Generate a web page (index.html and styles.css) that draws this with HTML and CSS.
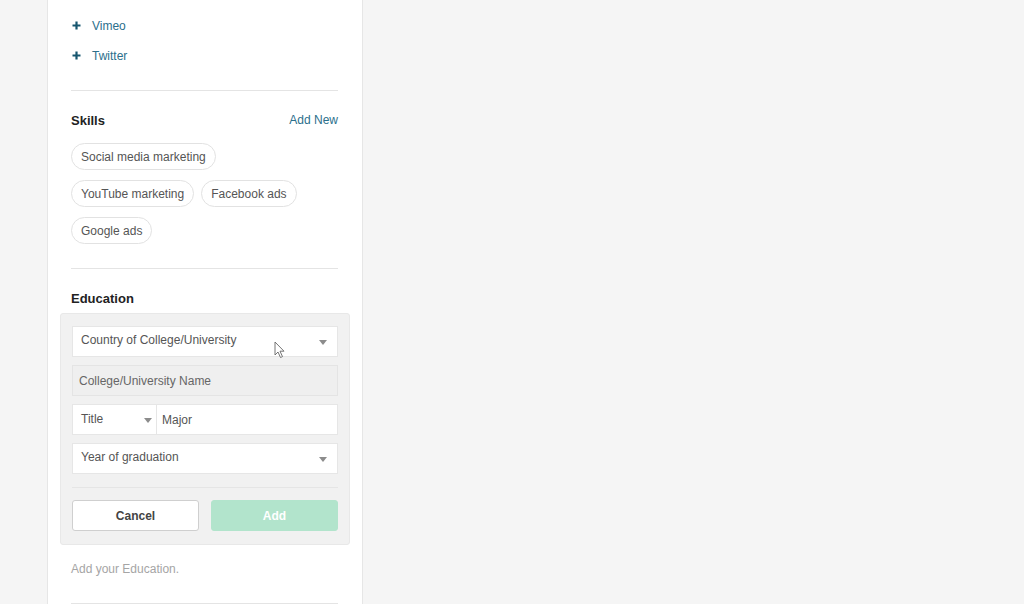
FILE: index.html
```html
<!DOCTYPE html>
<html>
<head>
<meta charset="utf-8">
<link rel="stylesheet" href="styles.css">
</head>
<body>
<div class="panel">
  <ul class="links">
    <li><svg class="plus" width="9" height="9" viewBox="0 0 9 9"><path d="M4.5 0.5V8.5M0.5 4.5H8.5" stroke="#17566f" stroke-width="2.2"/></svg><span class="link">Vimeo</span></li>
    <li><svg class="plus" width="9" height="9" viewBox="0 0 9 9"><path d="M4.5 0.5V8.5M0.5 4.5H8.5" stroke="#17566f" stroke-width="2.2"/></svg><span class="link">Twitter</span></li>
  </ul>

  <section class="section skills">
    <div class="sec-head">
      <h3>Skills</h3>
      <a class="add-new">Add New</a>
    </div>
    <div class="chips">
      <div class="chip-row"><span class="chip">Social media marketing</span></div>
      <div class="chip-row"><span class="chip">YouTube marketing</span><span class="chip">Facebook ads</span></div>
      <div class="chip-row"><span class="chip">Google ads</span></div>
    </div>
  </section>

  <section class="section education">
    <div class="sec-head"><h3>Education</h3></div>
    <div class="edu-form">
      <div class="field select"><span>Country of College/University</span><i class="caret"></i></div>
      <div class="field disabled"><span>College/University Name</span></div>
      <div class="field split">
        <div class="part title"><span>Title</span><i class="caret"></i></div>
        <div class="part major"><span>Major</span></div>
      </div>
      <div class="field select"><span>Year of graduation</span><i class="caret"></i></div>
      <div class="actions">
        <button class="btn cancel">Cancel</button>
        <button class="btn add">Add</button>
      </div>
      <svg class="cursor" width="12" height="18" viewBox="0 0 12 18"><path d="M1 1 L1 14 L4 11 L6.5 16.5 L8.5 15.6 L6 10.2 L10 10.2 Z" fill="#fff" stroke="#666" stroke-width="0.9" stroke-linejoin="round"/></svg>
    </div>
    <p class="hint">Add your Education.</p>
  </section>
  <div class="section end"></div>
</div>
</body>
</html>
```

FILE: styles.css
```css
html, body {
  margin: 0;
  padding: 0;
  background: #f5f5f5;
  font-family: "Liberation Sans", Arial, sans-serif;
  overflow: hidden;
}

.panel {
  margin: 0 0 0 47px;
  width: 268px;
  padding: 10px 23px 0;
  background: #fff;
  border-left: 1px solid #e6e6e6;
  border-right: 1px solid #e6e6e6;
  min-height: 700px;
}

.links {
  list-style: none;
  margin: 0;
  padding: 0 0 20px 0;
}
.links li {
  display: flex;
  align-items: center;
  height: 30px;
  font-size: 12px;
}
.links li span {
  margin-top: 2px;
}
.plus {
  margin: 1px 11px 0 1px;
}
.link {
  color: #2b6f8c;
}

.section {
  border-top: 1px solid #e4e4e4;
  margin-right: 1px;
}

.sec-head {
  display: flex;
  justify-content: space-between;
  align-items: center;
  height: 20px;
}
.sec-head h3 {
  margin: 0;
  font-size: 13px;
  font-weight: bold;
  color: #222;
}
.add-new {
  font-size: 12px;
  color: #2b6f8c;
}

.skills {
  padding: 19px 0 24px;
}
.chips {
  display: flex;
  flex-direction: column;
  gap: 10px;
  margin-top: 13px;
}
.chip-row {
  display: flex;
  gap: 7px;
}
.chip {
  display: inline-flex;
  align-items: center;
  height: 25px;
  padding: 0 9px;
  border: 1px solid #e2e2e2;
  border-radius: 14px;
  font-size: 12px;
  color: #555;
}

.education {
  padding: 19px 0 0;
}
.edu-form {
  position: relative;
  margin: 5px -12px 0 -11px;
  padding: 12px 11px 13px 11px;
  background: #f1f1f1;
  border: 1px solid #e8e8e8;
  border-radius: 3px;
  display: flex;
  flex-direction: column;
  gap: 8px;
}
.field {
  height: 31px;
  box-sizing: border-box;
  background: #fff;
  border: 1px solid #e6e6e6;
  display: flex;
  align-items: center;
  justify-content: space-between;
  padding: 0 10px 0 8px;
  font-size: 12px;
  color: #555;
}
.field.disabled {
  background: #efefef;
  border-color: #e4e4e4;
  padding-left: 6px;
  color: #666;
}
.field.split {
  padding: 0;
}
.part {
  height: 100%;
  display: flex;
  align-items: center;
}
.part.title {
  width: 84px;
  box-sizing: border-box;
  padding: 0 4px 0 8px;
  justify-content: space-between;
  border-right: 1px solid #e6e6e6;
}
.part.title span {
  margin-top: -2px;
}
.part.title .caret {
  margin-top: 2px;
}
.part.major {
  flex: 1;
  padding-left: 5px;
}
.caret {
  width: 0;
  height: 0;
  border-left: 4.5px solid transparent;
  border-right: 4.5px solid transparent;
  border-top: 5px solid #8c8c8c;
  margin-top: 2px;
}
.select span {
  margin-top: -3px;
}

.actions {
  margin-top: 5px;
  padding-top: 12px;
  border-top: 1px solid #e5e5e5;
  display: flex;
  gap: 12px;
}
.btn {
  flex: 1;
  height: 31px;
  border-radius: 3px;
  font-family: "Liberation Sans", Arial, sans-serif;
  font-size: 12px;
  font-weight: bold;
}
.cancel {
  background: #fff;
  border: 1px solid #cfcfcf;
  color: #444;
}
.add {
  background: #b2e4cc;
  border: 1px solid #b2e4cc;
  color: #fff;
}

.cursor {
  position: absolute;
  left: 213px;
  top: 27px;
}

.hint {
  margin: 17px 0 0;
  padding-bottom: 27px;
  font-size: 12px;
  color: #a5a5a5;
}
```
